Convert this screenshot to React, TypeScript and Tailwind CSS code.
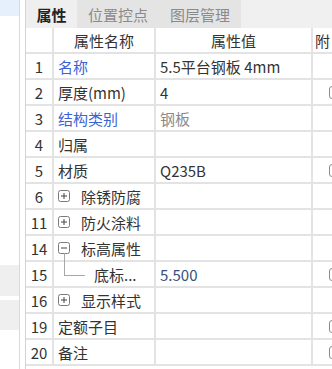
import React from "react";

const LINE = "border-[#e3e3e3]";

function Box({ minus }: { minus?: boolean }) {
  return (
    <svg width="12" height="12" viewBox="0 0 12 12" className="shrink-0">
      <rect x="0.5" y="0.5" width="11" height="11" rx="2" fill="white" stroke="#7a7a7a" />
      <line x1="3" y1="6" x2="9" y2="6" stroke="#444" strokeWidth="1" />
      {!minus && <line x1="6" y1="3" x2="6" y2="9" stroke="#444" strokeWidth="1" />}
    </svg>
  );
}

type Row = {
  n: string;
  name: React.ReactNode;
  value?: React.ReactNode;
  check?: boolean;
};

const rows: Row[] = [
  { n: "1", name: <span className="text-[#3b63d6]">名称</span>, value: "5.5平台钢板 4mm" },
  { n: "2", name: "厚度(mm)", value: "4", check: true },
  { n: "3", name: <span className="text-[#3b63d6]">结构类别</span>, value: <span className="text-[#8a8a8a]">钢板</span> },
  { n: "4", name: "归属" },
  { n: "5", name: "材质", value: "Q235B", check: true },
  { n: "6", name: <span className="flex items-center gap-[11px]"><Box />除锈防腐</span> },
  { n: "11", name: <span className="flex items-center gap-[11px]"><Box />防火涂料</span> },
  { n: "14", name: <span className="flex items-center gap-[11px]"><Box minus />标高属性</span> },
  {
    n: "15",
    name: (
      <span className="relative flex items-center pl-[36px]">
        <span className="absolute left-[6px] top-[-14px] h-[23px] w-[21px] border-l border-b border-[#a8a8a8]" />
        底标...
      </span>
    ),
    value: <span className="text-[#34507e]">5.500</span>,
    check: true,
  },
  { n: "16", name: <span className="flex items-center gap-[11px]"><Box />显示样式</span> },
  { n: "19", name: "定额子目", check: true },
  { n: "20", name: "备注", check: true },
];

export default function App() {
  return (
    <div
      className="flex h-[369px] w-[332px] overflow-hidden bg-white text-[15px] leading-none text-[#333]"
      style={{ fontFamily: '"Noto Sans CJK SC", "Noto Sans", sans-serif' }}
    >
      {/* left side panel */}
      <div className="flex w-[20px] shrink-0 flex-col border-r border-[#dadada]">
        <div className="h-[16px] bg-[#e6effc]" />
        <div className="h-[249px]" />
        <div className="h-[31px] bg-[#efefef]" />
        <div className="h-[4px]" />
        <div className="h-[30px] bg-[#efefef]" />
      </div>
      <div className="w-[5px] shrink-0" />
      {/* main panel */}
      <div className="flex min-w-0 flex-1 flex-col border-l border-[#d4d4d4]">
        {/* tabs */}
        <div className="flex h-[28px] shrink-0 bg-[#f0f0f0]">
          <div className="flex w-[51px] items-center justify-center bg-[#efefef] font-bold text-[#222]">属性</div>
          <div className="flex w-[82px] items-center justify-center bg-[#e4e4e4] text-[#8a8a8a]">位置控点</div>
          <div className="flex w-[82px] items-center justify-center bg-[#e4e4e4] text-[#8a8a8a]">图层管理</div>
          <div className="flex-1" />
        </div>
        {/* header */}
        <div className={`flex h-[26px] shrink-0 border-b-2 ${LINE}`}>
          <div className={`w-[28px] shrink-0 border-r-2 ${LINE}`} />
          <div className={`flex w-[102px] shrink-0 items-center justify-center border-r-2 ${LINE}`}>属性名称</div>
          <div className={`flex w-[157px] shrink-0 items-center justify-center border-r-2 ${LINE}`}>属性值</div>
          <div className="flex flex-1 items-center pl-[2px]">附</div>
        </div>
        {rows.map((r) => (
          <div key={r.n} className={`flex h-[26px] shrink-0 border-b-2 ${LINE}`}>
            <div className={`flex w-[28px] shrink-0 items-center justify-center border-r-2 ${LINE}`}>{r.n}</div>
            <div className={`flex w-[102px] shrink-0 items-center whitespace-nowrap border-r-2 pl-[4px] ${LINE}`}>{r.name}</div>
            <div className={`flex w-[157px] shrink-0 items-center whitespace-nowrap border-r-2 pl-[4px] ${LINE}`}>{r.value}</div>
            <div className="flex flex-1 items-center pl-[16px]">
              {r.check && <div className="h-[13px] w-[12px] shrink-0 rounded-[3px] border border-[#8c8c8c] bg-white" />}
            </div>
          </div>
        ))}
      </div>
    </div>
  );
}
